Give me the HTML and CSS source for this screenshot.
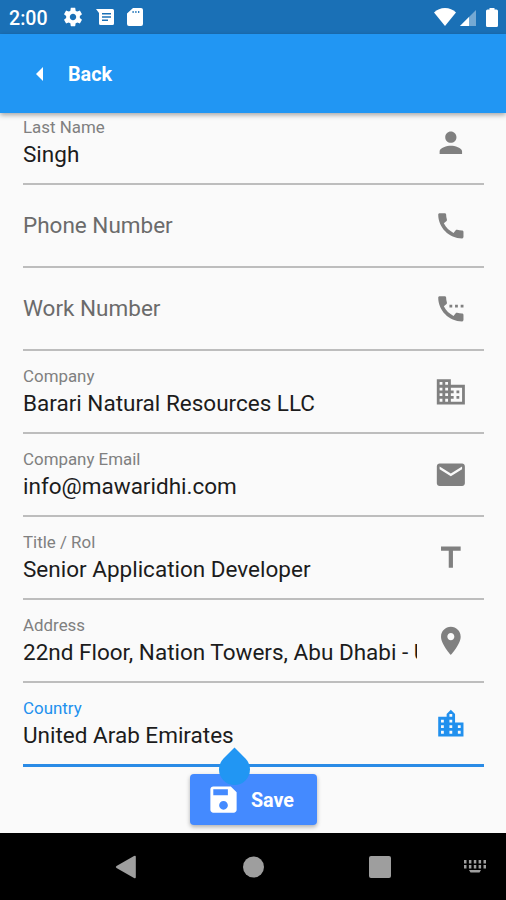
FILE: index.html
```html
<!DOCTYPE html>
<html lang="en">
<head>
    <meta charset="UTF-8">
    <title>Edit Contact</title>
    <link rel="stylesheet" href="styles.css">
</head>
<body>
    <div class="phone">
        <div class="status-bar">
            <span class="time">2:00</span>
            <svg class="gear" viewBox="0 0 24 24"><path d="M19.43 12.98c.04-.32.07-.64.07-.98s-.03-.66-.07-.98l2.11-1.65c.19-.15.24-.42.12-.64l-2-3.46c-.12-.22-.39-.3-.61-.22l-2.49 1c-.52-.4-1.08-.73-1.69-.98l-.38-2.65C14.46 2.18 14.25 2 14 2h-4c-.25 0-.46.18-.49.42l-.38 2.65c-.61.25-1.17.59-1.69.98l-2.49-1c-.23-.09-.49 0-.61.22l-2 3.46c-.13.22-.07.49.12.64l2.11 1.65c-.04.32-.07.65-.07.98s.03.66.07.98l-2.11 1.65c-.19.15-.24.42-.12.64l2 3.46c.12.22.39.3.61.22l2.49-1c.52.4 1.08.73 1.69.98l.38 2.65c.03.24.24.42.49.42h4c.25 0 .46-.18.49-.42l.38-2.65c.61-.25 1.17-.59 1.69-.98l2.49 1c.23.09.49 0 .61-.22l2-3.46c.12-.22.07-.49-.12-.64l-2.11-1.65zM12 15.5c-1.93 0-3.5-1.57-3.5-3.5s1.57-3.5 3.5-3.5 3.5 1.57 3.5 3.5-1.57 3.5-3.5 3.5z"/></svg>
            <svg class="message" viewBox="0 0 18 17"><path fill-rule="evenodd" d="M0 0h16.500q1.500 0 1.500 1.500v13q0 1.500-1.500 1.500h-12q-1.500 0-1.500-1.500V4zM6 4v1.500h9V4zM6 7.300v1.500h9V7.300zM6 10.600v1.500h6v-1.500z"/></svg>
            <svg class="sd" viewBox="0 0 16 18"><path fill-rule="evenodd" d="M6 0h8q2 0 2 2v14q0 2-2 2H2q-2 0-2-2V5.500zM5.500 3v2h1.200V3zM8.300 3v2h1.200V3zM11.100 3v2h1.200V3z"/></svg>
            <div class="status-right">
                <svg class="wifi" viewBox="0 0 22 18"><path d="M11 18L0 4.500Q4.500 0 11 0t11 4.500z"/></svg>
                <svg class="signal" viewBox="0 0 16 16"><path opacity=".4" d="M16 0v16H0z"/><path d="M9 7v9H0z"/></svg>
                <svg class="battery" viewBox="0 0 12 19"><path d="M3.500 0h5v1.500H10.500q1.500 0 1.500 1.500v14.500q0 1.500-1.500 1.500h-9q-1.500 0-1.500-1.500V3q0-1.500 1.500-1.500h2z"/></svg>
            </div>
        </div>

        <div class="app-bar">
            <svg class="back-arrow" viewBox="0 0 7 14"><path d="M7 0v14L0 7z"/></svg>
            <span class="back-text">Back</span>
        </div>

        <div class="content">
            <div class="form">
                <div class="field">
                    <div class="field-text">
                        <div class="label">Last Name</div>
                        <div class="value">Singh</div>
                    </div>
                    <svg class="icon" viewBox="0 0 24 24"><path d="M12 12c2.210 0 4-1.790 4-4s-1.790-4-4-4-4 1.790-4 4 1.790 4 4 4zm0 2c-2.670 0-8 1.340-8 4v2h16v-2c0-2.660-5.330-4-8-4z"/></svg>
                </div>
                <div class="field">
                    <div class="field-text">
                        <div class="value empty">Phone Number</div>
                    </div>
                    <svg class="icon" viewBox="0 0 24 24"><path d="M20.010 15.380c-1.230 0-2.420-.2-3.530-.56-.35-.12-.74-.03-1.010.24l-1.570 1.970c-2.830-1.350-5.480-3.900-6.890-6.830l1.950-1.660c.27-.28.35-.67.24-1.020-.37-1.110-.56-2.300-.56-3.530 0-.54-.45-.99-.99-.99H4.190C3.650 3 3 3.240 3 3.990 3 13.280 10.730 21 20.010 21c.71 0 .99-.63.99-1.180v-3.450c0-.54-.45-.99-.99-.99z"/></svg>
                </div>
                <div class="field">
                    <div class="field-text">
                        <div class="value empty">Work Number</div>
                    </div>
                    <svg class="icon" viewBox="0 0 24 24"><path d="M20.010 15.380c-1.230 0-2.420-.2-3.530-.56-.35-.12-.74-.03-1.010.24l-1.570 1.970c-2.830-1.350-5.480-3.900-6.890-6.830l1.950-1.660c.27-.28.35-.67.24-1.020-.37-1.110-.56-2.300-.56-3.530 0-.54-.45-.99-.99-.99H4.190C3.650 3 3 3.240 3 3.990 3 13.280 10.730 21 20.010 21c.71 0 .99-.63.99-1.180v-3.450c0-.54-.45-.99-.99-.99zM11 9h2v2h-2zm4 0h2v2h-2zm4 0h2v2h-2z"/></svg>
                </div>
                <div class="field">
                    <div class="field-text">
                        <div class="label">Company</div>
                        <div class="value">Barari Natural Resources LLC</div>
                    </div>
                    <svg class="icon" viewBox="0 0 24 24"><path d="M12 7V3H2v18h20V7H12zM6 19H4v-2h2v2zm0-4H4v-2h2v2zm0-4H4V9h2v2zm0-4H4V5h2v2zm4 12H8v-2h2v2zm0-4H8v-2h2v2zm0-4H8V9h2v2zm0-4H8V5h2v2zm10 12h-8v-2h2v-2h-2v-2h2v-2h-2V9h8v10zm-2-8h-2v2h2v-2zm0 4h-2v2h2v-2z"/></svg>
                </div>
                <div class="field">
                    <div class="field-text">
                        <div class="label">Company Email</div>
                        <div class="value">info@mawaridhi.com</div>
                    </div>
                    <svg class="icon" viewBox="0 0 24 24"><path d="M20 4H4c-1.100 0-1.990.9-1.990 2L2 18c0 1.100.9 2 2 2h16c1.100 0 2-.9 2-2V6c0-1.100-.9-2-2-2zm0 4l-8 5-8-5V6l8 5 8-5v2z"/></svg>
                </div>
                <div class="field">
                    <div class="field-text">
                        <div class="label">Title / Rol</div>
                        <div class="value">Senior Application Developer</div>
                    </div>
                    <svg class="icon" viewBox="0 0 24 24"><path d="M5 4v3h5.500v12h3V7H19V4z"/></svg>
                </div>
                <div class="field">
                    <div class="field-text">
                        <div class="label">Address</div>
                        <div class="value">22nd Floor, Nation Towers, Abu Dhabi - U</div>
                    </div>
                    <svg class="icon" viewBox="0 0 24 24"><path d="M12 2C8.130 2 5 5.130 5 9c0 5.250 7 13 7 13s7-7.750 7-13c0-3.870-3.130-7-7-7zm0 9.500c-1.380 0-2.500-1.120-2.500-2.500s1.120-2.500 2.500-2.500 2.500 1.120 2.500 2.500-1.120 2.500-2.500 2.500z"/></svg>
                </div>
                <div class="field active">
                    <div class="field-text">
                        <div class="label">Country</div>
                        <div class="value">United Arab Emirates</div>
                    </div>
                    <svg class="icon" viewBox="0 0 24 24"><path d="M15 11V5l-3-3-3 3v2H3v14h18V11h-6zm-8 8H5v-2h2v2zm0-4H5v-2h2v2zm0-4H5V9h2v2zm6 8h-2v-2h2v2zm0-4h-2v-2h2v2zm0-4h-2V9h2v2zm0-4h-2V5h2v2zm6 12h-2v-2h2v2zm0-4h-2v-2h2v2z"/></svg>
                    <div class="handle"></div>
                </div>
            </div>

            <button class="save-btn">
                <svg class="save-icon" viewBox="0 0 24 24"><path d="M17 3H5c-1.110 0-2 .9-2 2v14c0 1.100.89 2 2 2h14c1.100 0 2-.9 2-2V7l-4-4zm-5 16c-1.660 0-3-1.340-3-3s1.340-3 3-3 3 1.340 3 3-1.340 3-3 3zm3-10H5V5h10v4z"/></svg>
                <span class="save-text">Save</span>
            </button>
        </div>

        <div class="nav-bar">
            <svg viewBox="0 0 24 24"><path d="M20 1q1.800-1 1.800 1v20q0 2-1.800 1L2.500 13q-1.500-1 0-2z"/></svg>
            <svg viewBox="0 0 24 24"><circle cx="12.500" cy="12" r="10.500"/></svg>
            <svg viewBox="0 0 24 24"><rect x="1" y="1" width="22" height="22" rx="2"/></svg>
            <svg class="keyboard" viewBox="0 0 22 13"><path d="M0 0h2.500v3.500H0zM4.900 0h2.500v3.500H4.900zM9.800 0h2.500v3.500H9.800zM14.600 0h2.500v3.500h-2.500zM19.500 0H22v3.500h-2.500zM0 5h2.500v3.500H0zM4.900 5h2.500v3.500H4.900zM9.800 5h2.500v3.500H9.800zM14.600 5h2.500v3.500h-2.500zM19.500 5H22v3.500h-2.500zM5 10h12l-1.500 2.500h-9z"/></svg>
        </div>
    </div>
</body>
</html>
```

FILE: styles.css
```css
* {
    margin: 0;
    padding: 0;
    box-sizing: border-box;
}
body {
    font-family: Roboto, "Liberation Sans", sans-serif;
    background-color: #fafafa;
}
svg {
    display: block;
    fill: currentColor;
    flex-shrink: 0;
}
.phone {
    width: 506px;
    height: 900px;
    display: flex;
    flex-direction: column;
    overflow: hidden;
}

/* status bar */
.status-bar {
    height: 34px;
    padding: 0 8px 0 9px;
    display: flex;
    align-items: center;
    background-color: #1a70b6;
    color: #fff;
}
.time {
    width: 53px;
    font-size: 19.6px;
    font-weight: 500;
    line-height: 34px;
    padding-top: 3px;
}
.gear {
    width: 22px;
    height: 22px;
    margin-right: 12px;
}
.message {
    width: 18px;
    height: 17px;
    margin-right: 13px;
}
.sd {
    width: 16px;
    height: 18px;
}
.status-right {
    margin-left: auto;
    display: flex;
    align-items: center;
}
.wifi {
    width: 22px;
    height: 18px;
    margin-right: 4px;
}
.signal {
    width: 16px;
    height: 16px;
    margin: 2px 10px 0 0;
}
.battery {
    width: 12px;
    height: 19px;
}

/* app bar */
.app-bar {
    height: 79px;
    padding-left: 36px;
    display: flex;
    align-items: center;
    background-color: #2196f3;
    color: #fff;
    box-shadow: 0 2px 5px rgba(0,0,0,0.35);
    position: relative;
    z-index: 2;
}
.back-arrow {
    width: 7px;
    height: 14px;
    margin-right: 25px;
}
.back-text {
    padding-top: 2px;
    font-size: 19.8px;
    font-weight: 700;
}

/* form */
.content {
    height: 720px;
    overflow: hidden;
}
.form {
    width: 461px;
    margin: -11px 0 0 23px;
}
.field {
    height: 83px;
    display: flex;
    align-items: center;
    border-bottom: 2px solid #bdbdbd;
    position: relative;
}
.field-text {
    width: 394px;
    padding-bottom: 2px;
    overflow: hidden;
    white-space: nowrap;
}
.label {
    margin-bottom: 4px;
    font-size: 16.9px;
    line-height: 20px;
    color: #808080;
}
.value {
    font-size: 22.5px;
    line-height: 26px;
    color: #1c1c1c;
}
.value.empty {
    color: #6b6b6b;
}
.icon {
    width: 33.7px;
    height: 33.7px;
    margin-left: 16.6px;
    color: #808080;
}
.field.active {
    height: 84px;
    border-bottom: 3px solid #2a8be6;
}
.active .label,
.active .icon {
    color: #2190ee;
}
.handle {
    position: absolute;
    left: 195.5px;
    top: 71px;
    width: 31px;
    height: 31px;
    background-color: #2196f3;
    border-radius: 0 50% 50% 50%;
    transform: rotate(45deg);
}
.save-btn {
    width: 127px;
    height: 51px;
    margin: 7px 0 0 190px;
    padding-left: 16px;
    display: flex;
    align-items: center;
    background-color: #448aff;
    color: #fff;
    border: none;
    border-radius: 4px;
    box-shadow: 0 2px 4px rgba(0,0,0,0.3);
    font-family: inherit;
    font-size: 19.7px;
    font-weight: 700;
}
.save-icon {
    width: 35px;
    height: 35px;
    margin-right: 10px;
}
.save-text {
    padding-top: 2px;
}

/* navigation bar */
.nav-bar {
    height: 67px;
    padding-left: 114px;
    display: flex;
    align-items: center;
    background-color: #000;
    color: #9e9e9e;
}
.nav-bar svg {
    width: 24px;
    height: 24px;
    margin-right: 103px;
}
.nav-bar .keyboard {
    width: 22px;
    height: 13px;
    margin: 0 0 0 -31px;
}
```
